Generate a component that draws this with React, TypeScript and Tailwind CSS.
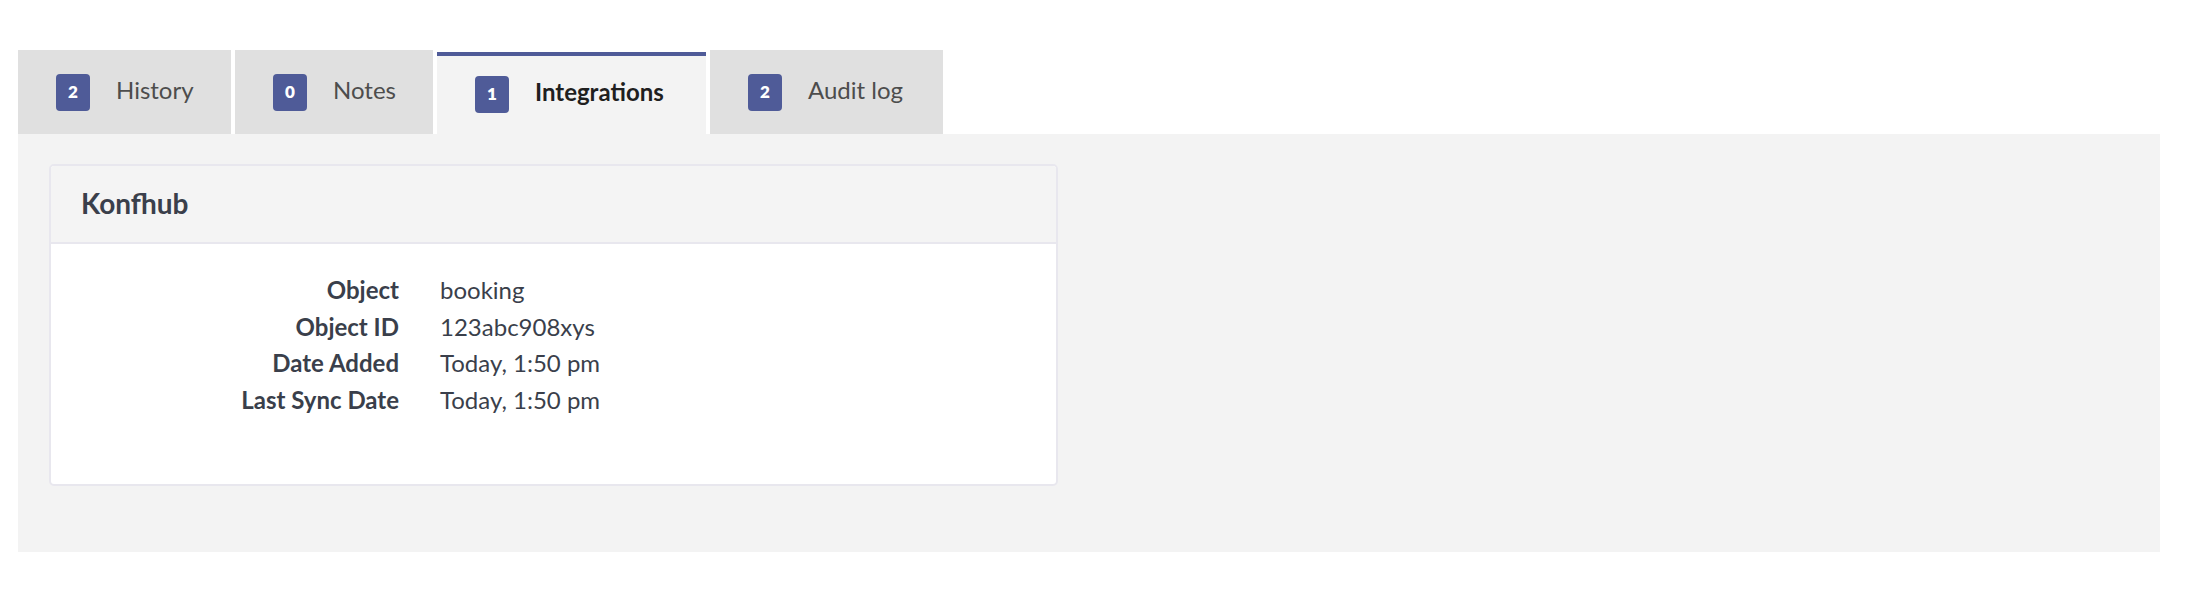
import React from "react";

const tabs = [
  { n: 2, label: "History", active: false, w: "w-[213px]" },
  { n: 0, label: "Notes", active: false, w: "w-[198px]" },
  { n: 1, label: "Integrations", active: true, w: "w-[269px]" },
  { n: 2, label: "Audit log", active: false, w: "w-[233px]" },
];

const rows = [
  ["Object", "booking"],
  ["Object ID", "123abc908xys"],
  ["Date Added", "Today, 1:50 pm"],
  ["Last Sync Date", "Today, 1:50 pm"],
];

function Badge({ n }: { n: number }) {
  return (
    <span className="flex items-center justify-center shrink-0 w-[34px] h-[37px] rounded-[4px] bg-[#4f5b98] text-white text-[17px] font-extrabold">
      {n}
    </span>
  );
}

export default function App() {
  return (
    <div
      className="w-[2188px] h-[600px] bg-white"
      style={{ fontFamily: "Lato, 'Open Sans', sans-serif" }}
    >
      <div className="pt-[50px] pl-[18px] pr-[28px]">
        <div className="flex items-end gap-[4px] h-[84px]">
          {tabs.map((t) =>
            t.active ? (
              <div
                key={t.label}
                className={`flex items-center h-[82px] border-t-4 border-[#4f5b98] bg-[#f3f3f3] pl-[38px] pb-[2px] ${t.w}`}
              >
                <Badge n={t.n} />
                <span className="ml-[26px] mb-[5px] text-[24px] font-bold text-[#1f1f1f]">
                  {t.label}
                </span>
              </div>
            ) : (
              <div
                key={t.label}
                className={`flex items-center h-[84px] bg-[#e0e0e0] pl-[38px] ${t.w}`}
              >
                <Badge n={t.n} />
                <span className="ml-[26px] mb-[5px] text-[24px] text-[#4d4d4d]">
                  {t.label}
                </span>
              </div>
            )
          )}
        </div>
        <div className="bg-[#f3f3f3] h-[418px] pt-[30px] pl-[31px]">
          <div className="w-[1009px] rounded-[5px] border-2 border-[#e8e7ee] bg-white overflow-hidden">
            <div className="h-[78px] flex items-center px-[30px] bg-[#f4f4f4] border-b-2 border-[#e8e7ee]">
              <span className="text-[28px] mb-[2px] font-bold text-[#3a3f4b]">Konfhub</span>
            </div>
            <div className="pt-[28px] pb-[66px] grid grid-cols-[348px_1fr] gap-x-[41px] text-[24px] leading-[36.6px] text-[#3a3f4b]">
              {rows.map(([k, v]) => (
                <React.Fragment key={k}>
                  <div className="text-right font-bold">{k}</div>
                  <div>{v}</div>
                </React.Fragment>
              ))}
            </div>
          </div>
        </div>
      </div>
    </div>
  );
}
